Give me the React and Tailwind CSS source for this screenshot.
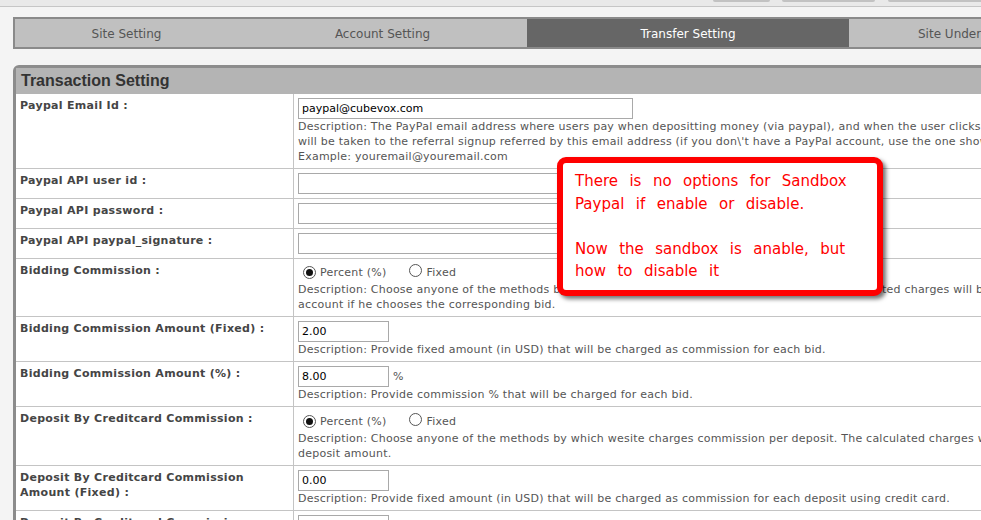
import React from "react";

function Radio({ checked }) {
  return (
    <span className="inline-flex w-[13px] h-[13px] rounded-full border border-[#555] bg-white items-center justify-center shrink-0">
      {checked ? <span className="w-[7px] h-[7px] rounded-full bg-[#111]" /> : null}
    </span>
  );
}

function Row({ label, children }) {
  return (
    <div className="flex border-b border-[#c4c4c4]">
      <div className="w-[278px] shrink-0 border-r border-[#c4c4c4] pl-[4px] pt-[4px] pr-[6px] text-[11px] leading-[15px] font-bold text-[#454545] tracking-[0.3px]">
        {label}
      </div>
      <div className="flex-1 pl-[4px] pt-[4px] pb-[4px] text-[11px] leading-[15px] text-[#555] tracking-[0.23px]">
        {children}
      </div>
    </div>
  );
}

function TextInput({ value = "", w = "w-[335px]" }) {
  return (
    <div className={`${w} h-[21px] border border-[#a9a9a9] bg-white px-[3px] text-[11px] leading-[19px] text-black tracking-normal`}>
      {value}
    </div>
  );
}

function Line({ children }) {
  return <div className="whitespace-nowrap">{children}</div>;
}

function RadioLine() {
  return (
    <div className="flex items-center h-[19px] pl-[5px]">
      <Radio checked />
      <span className="ml-[4px]">Percent (%)</span>
      <span className="ml-[23px]">
        <Radio />
      </span>
      <span className="ml-[4px]">Fixed</span>
    </div>
  );
}

export default function App() {
  return (
    <div className="relative w-[981px] h-[520px] overflow-hidden bg-[#f4f4f4] font-['DejaVu_Sans',sans-serif]">
      {/* top strip */}
      <div className="h-[7px] bg-[#e9e9e9] border-b border-[#c6c6c6] flex items-start">
        <div className="shrink-0 ml-[713px] w-[57px] h-[2px] rounded-b-[3px] bg-[#c2c2c2]" />
        <div className="shrink-0 ml-[12px] w-[93px] h-[2px] rounded-b-[3px] bg-[#c2c2c2]" />
        <div className="shrink-0 ml-[13px] w-[120px] h-[2px] rounded-b-[3px] bg-[#c2c2c2]" />
      </div>

      {/* tabs */}
      <div className="mt-[10px] ml-[13px] w-[1200px] h-[32px] border-2 border-[#8a8a8a] bg-[#c0c0c0] flex text-[12px] text-[#555]">
        <div className="w-[223px] flex items-center justify-center pt-[1px]">Site Setting</div>
        <div className="w-[289px] flex items-center justify-center pt-[1px]">Account Setting</div>
        <div className="w-[322px] flex items-center justify-center pt-[1px] bg-[#666] text-white">Transfer Setting</div>
        <div className="flex-1 flex items-center pt-[1px] pl-[69px] whitespace-nowrap">Site Under Maintenance</div>
      </div>

      {/* panel */}
      <div className="mt-[16px] ml-[13px] w-[1200px] border-[3px] border-[#8c8c8c] rounded-tl-[6px] bg-white">
        <div className="h-[26px] bg-[#b4b4b4] pl-[5px] flex items-center font-['Liberation_Sans',sans-serif] font-bold text-[16px] text-[#333]">
          Transaction Setting
        </div>

        <Row label="Paypal Email Id :">
          <TextInput value="paypal@cubevox.com" />
          <div>
            <Line>Description: The PayPal email address where users pay when depositting money (via paypal), and when the user clicks on a referral link, they</Line>
            <Line>will be taken to the referral signup referred by this email address (if you don\'t have a PayPal account, use the one shown below)</Line>
            <Line>Example: youremail@youremail.com</Line>
          </div>
        </Row>

        <Row label="Paypal API user id :">
          <TextInput />
        </Row>
        <Row label="Paypal API password :">
          <TextInput />
        </Row>
        <Row label="Paypal API paypal_signature :">
          <TextInput />
        </Row>

        <Row label="Bidding Commission :">
          <RadioLine />
          <Line>Description: Choose anyone of the methods by which wesite charges commission per bid. The calculated charges will be deducted from user's</Line>
          <Line>account if he chooses the corresponding bid.</Line>
        </Row>

        <Row label="Bidding Commission Amount (Fixed) :">
          <TextInput value="2.00" w="w-[91px]" />
          <Line>Description: Provide fixed amount (in USD) that will be charged as commission for each bid.</Line>
        </Row>

        <Row label="Bidding Commission Amount (%) :">
          <div className="flex items-center">
            <TextInput value="8.00" w="w-[91px]" />
            <span className="ml-[4px]">%</span>
          </div>
          <Line>Description: Provide commission % that will be charged for each bid.</Line>
        </Row>

        <Row label="Deposit By Creditcard Commission :">
          <div className="pt-[1px]">
            <RadioLine />
          </div>
          <Line>Description: Choose anyone of the methods by which wesite charges commission per deposit. The calculated charges will be added to the</Line>
          <Line>deposit amount.</Line>
        </Row>

        <Row
          label={
            <>
              Deposit By Creditcard Commission
              <br />
              Amount (Fixed) :
            </>
          }
        >
          <TextInput value="0.00" w="w-[91px]" />
          <Line>Description: Provide fixed amount (in USD) that will be charged as commission for each deposit using credit card.</Line>
        </Row>

        <Row
          label={
            <>
              Deposit By Creditcard Commission
              <br />
              Amount (%) :
            </>
          }
        >
          <TextInput value="" w="w-[91px]" />
          <Line>Description: Provide commission % that will be charged for each deposit using credit card.</Line>
        </Row>
      </div>

      {/* callout */}
      <div className="absolute left-[557px] top-[157px] w-[326px] h-[139px] border-[6px] border-[#ff0000] rounded-[9px] bg-white shadow-[3px_3px_4px_rgba(0,0,0,0.55)] pl-[12px] pt-[7px] text-[15px] leading-[22.5px] text-[#ff0000] [word-spacing:6.7px] whitespace-nowrap">
        <div>There is no options for Sandbox</div>
        <div>Paypal if enable or disable.</div>
        <div>&nbsp;</div>
        <div>Now the sandbox is anable, but</div>
        <div>how to disable it</div>
      </div>
    </div>
  );
}
